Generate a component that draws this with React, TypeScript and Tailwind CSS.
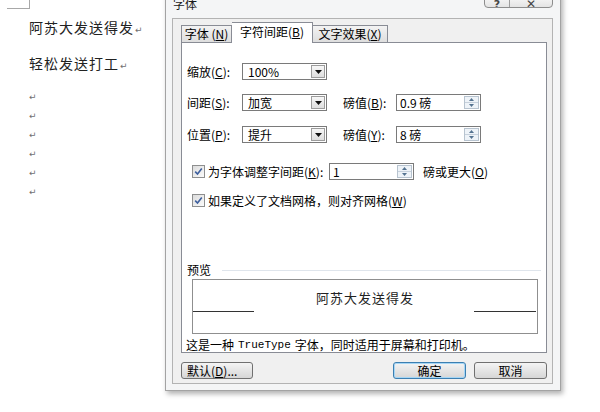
import React from "react";

const FONT = "font-['Noto_Sans_CJK_SC','Noto_Sans',sans-serif]";

function U({ c }: { c: string }) {
  return <span className="underline underline-offset-[1px]">{c}</span>;
}

function Acc({ pre, k, post = ")" }: { pre: string; k: string; post?: string }) {
  return (
    <span>
      {pre}(<U c={k} />
      {post}
    </span>
  );
}

function Select({ value }: { value: string }) {
  return (
    <div className="flex h-[17px] w-[85px] items-stretch border border-[#7a7a7a] bg-white">
      <div className="flex flex-1 items-center pl-[5px] text-[12px] leading-none">{value}</div>
      <div className="my-[1px] mr-[1px] flex w-[14px] items-center justify-center border border-[#9c9c9c] bg-gradient-to-b from-[#f7f7f7] to-[#dedede]">
        <svg width="7" height="4" viewBox="0 0 7 4">
          <path d="M0 0h7L3.5 4z" fill="#111" />
        </svg>
      </div>
    </div>
  );
}

function Spin({ value, w = "w-[85px]" }: { value: string; w?: string }) {
  return (
    <div className={`flex h-[17px] ${w} items-stretch border border-[#7a7a7a] bg-white`}>
      <div className="flex flex-1 items-center pl-[3px] text-[12px] leading-none">{value}</div>
      <div className="my-[1px] mr-[1px] flex w-[15px] flex-col border border-[#b7c3cf] bg-[#eef3f8]">
        <div className="flex flex-1 items-center justify-center border-b border-[#c7d1dc]">
          <svg width="5" height="3" viewBox="0 0 5 3">
            <path d="M0 3h5L2.5 0z" fill="#557391" />
          </svg>
        </div>
        <div className="flex flex-1 items-center justify-center">
          <svg width="5" height="3" viewBox="0 0 5 3">
            <path d="M0 0h5L2.5 3z" fill="#557391" />
          </svg>
        </div>
      </div>
    </div>
  );
}

function Check() {
  return (
    <div className="flex h-[13px] w-[13px] shrink-0 items-center justify-center border border-[#8e8f8f] bg-gradient-to-br from-[#dcdcdc] to-[#fbfbfb]">
      <svg width="9" height="9" viewBox="0 0 9 9">
        <path d="M1.2 4.6l2.3 2.4L7.8 1.6" stroke="#3d5f9e" strokeWidth="1.6" fill="none" />
      </svg>
    </div>
  );
}

function Mark() {
  return <span className="ml-[1px] font-['DejaVu_Sans',sans-serif] text-[9px] text-[#6f6f6f]">↵</span>;
}

export default function App() {
  return (
    <div className={`relative h-[412px] w-[600px] overflow-hidden bg-white ${FONT} text-black`}>
      {/* Document */}
      <div className="flex flex-col">
        <div className="ml-[7px] h-[9px] w-[23px] border-b border-r border-[#a8a8a8]" />
        <div className="ml-[29px] mt-[9px] h-[18px] text-[14px] leading-[18px] tracking-[1px] text-[#222]">
          阿苏大发送得发
          <Mark />
        </div>
        <div className="ml-[29px] mt-[18px] h-[18px] text-[14px] leading-[18px] tracking-[1px] text-[#222]">
          轻松发送打工
          <Mark />
        </div>
        <div className="ml-[29px] mt-[16px] flex flex-col">
          {[0, 1, 2, 3, 4, 5].map((i) => (
            <div key={i} className="h-[19px] font-['DejaVu_Sans',sans-serif] text-[9px] leading-[19px] text-[#6f6f6f]">
              ↵
            </div>
          ))}
        </div>
      </div>

      {/* Dialog window */}
      <div className="absolute left-[165px] top-[-8px] flex h-[399px] w-[396px] flex-col border border-[#a3a3a3] bg-[#f4f5f6] pb-[6px] pl-[6px] pr-[7px] shadow-[2px_3px_5px_rgba(0,0,0,0.3)]">
        {/* Title bar */}
        <div className="relative h-[25px] shrink-0">
          <div className="pl-[1px] pt-[4px] text-[12px] leading-[14px] text-[#1a1a1a]">字体</div>
          <div className="absolute right-[0px] top-[-1px] flex h-[16px] w-[69px] overflow-hidden rounded-b-[4px] border border-[#8d8d8d] bg-gradient-to-b from-[#ffffff] to-[#e4e4e4]">
            <div className="flex w-[25px] items-end justify-center border-r border-[#9d9d9d] text-[11px] leading-[11px] text-[#444]">
              <span className="mb-[-3px] font-['DejaVu_Sans',sans-serif] font-bold">?</span>
            </div>
            <div className="flex flex-1 items-end justify-center text-[12px] leading-[12px] text-[#444]">
              <span className="mb-[-3px] font-['DejaVu_Sans',sans-serif] font-bold">✕</span>
            </div>
          </div>
        </div>

        {/* Client */}
        <div className="flex flex-1 flex-col border border-[#b3b3b3] bg-[#f0f0f0] pl-[8px] pr-[5px] pt-[3px]">
          {/* Tabs */}
          <div className="flex h-[20px] items-end text-[12px]">
            <div className="flex h-[17px] w-[51px] items-center justify-center border-l border-r border-t border-[#898c95] bg-gradient-to-b from-[#f3f3f3] to-[#dedede] leading-none">
              <Acc pre="字体 " k="N" />
            </div>
            <div className="relative z-10 -mb-[1px] flex h-[21px] w-[81px] items-center justify-center border-r border-t border-[#898c95] bg-white pb-[2px] leading-none">
              <Acc pre="字符间距" k="B" />
            </div>
            <div className="flex h-[17px] w-[75px] items-center justify-center border-r border-t border-[#898c95] bg-gradient-to-b from-[#f3f3f3] to-[#dedede] leading-none">
              <Acc pre="文字效果" k="X" />
            </div>
          </div>

          {/* Panel */}
          <div className="flex h-[311px] w-[366px] flex-col border border-[#898c95] bg-white text-[12px] leading-none">
            <div className="mt-[20px] flex h-[17px] items-center pl-[5px]">
              <div className="w-[55px]">
                <Acc pre="缩放" k="C" post="):" />
              </div>
              <Select value="100%" />
            </div>
            <div className="mt-[14px] flex h-[17px] items-center pl-[5px]">
              <div className="w-[55px]">
                <Acc pre="间距" k="S" post="):" />
              </div>
              <Select value="加宽" />
              <div className="ml-[16px] w-[53px]">
                <Acc pre="磅值" k="B" post="):" />
              </div>
              <Spin value="0.9 磅" />
            </div>
            <div className="mt-[15px] flex h-[17px] items-center pl-[5px]">
              <div className="w-[55px]">
                <Acc pre="位置" k="P" post="):" />
              </div>
              <Select value="提升" />
              <div className="ml-[16px] w-[53px]">
                <Acc pre="磅值" k="Y" post="):" />
              </div>
              <Spin value="8 磅" />
            </div>
            <div className="mt-[20px] flex h-[17px] items-center pl-[10px]">
              <Check />
              <div className="ml-[3px] w-[121px]">
                <Acc pre="为字体调整字间距" k="K" post="):" />
              </div>
              <Spin value="1" />
              <div className="ml-[9px]">
                <Acc pre="磅或更大" k="O" />
              </div>
            </div>
            <div className="mt-[12px] flex h-[17px] items-center pl-[10px]">
              <Check />
              <div className="ml-[3px]">
                <Acc pre="如果定义了文档网格，则对齐网格" k="W" />
              </div>
            </div>

            <div className="mt-[54px] flex h-[14px] items-center pl-[5px] pr-[5px]">
              <span>预览</span>
              <div className="ml-[11px] h-[1px] flex-1 bg-[#dfe5ec]" />
            </div>
            <div className="ml-[10px] mt-[2px] flex h-[55px] w-[346px] flex-col border border-[#8f8f8f]">
              <div className="mt-[9px] flex h-[16px] items-center justify-center text-[13px] tracking-[1px] text-[#222]">
                阿苏大发送得发
              </div>
              <div className="mt-[6px] flex justify-between pr-[1px]">
                <div className="h-[1px] w-[61px] bg-[#333]" />
                <div className="h-[1px] w-[62px] bg-[#333]" />
              </div>
            </div>
            <div className="mt-[4px] flex h-[14px] items-center pl-[4px]">
              这是一种
              <span className="mx-[4px] font-['Liberation_Mono',monospace] text-[11px]">TrueType</span>
              字体，同时适用于屏幕和打印机。
            </div>
          </div>

          {/* Buttons */}
          <div className="mt-[9px] flex h-[17px] items-center justify-between text-[12px] leading-none">
            <button className="flex h-[17px] w-[72px] items-center justify-start rounded-[3px] border border-[#707070] bg-gradient-to-b from-[#f4f4f4] to-[#d6d6d6] pl-[5px]">
              默认(<U c="D" />
              )...
            </button>
            <div className="flex gap-[8px]">
              <button className="flex h-[17px] w-[73px] items-center justify-center rounded-[3px] border border-[#3c7fb1] bg-gradient-to-b from-[#f4f4f4] to-[#d6d6d6] shadow-[inset_0_0_0_1px_#a6d6f5]">
                确定
              </button>
              <button className="flex h-[17px] w-[73px] items-center justify-center rounded-[3px] border border-[#707070] bg-gradient-to-b from-[#f4f4f4] to-[#d6d6d6]">
                取消
              </button>
            </div>
          </div>
        </div>
      </div>
    </div>
  );
}
